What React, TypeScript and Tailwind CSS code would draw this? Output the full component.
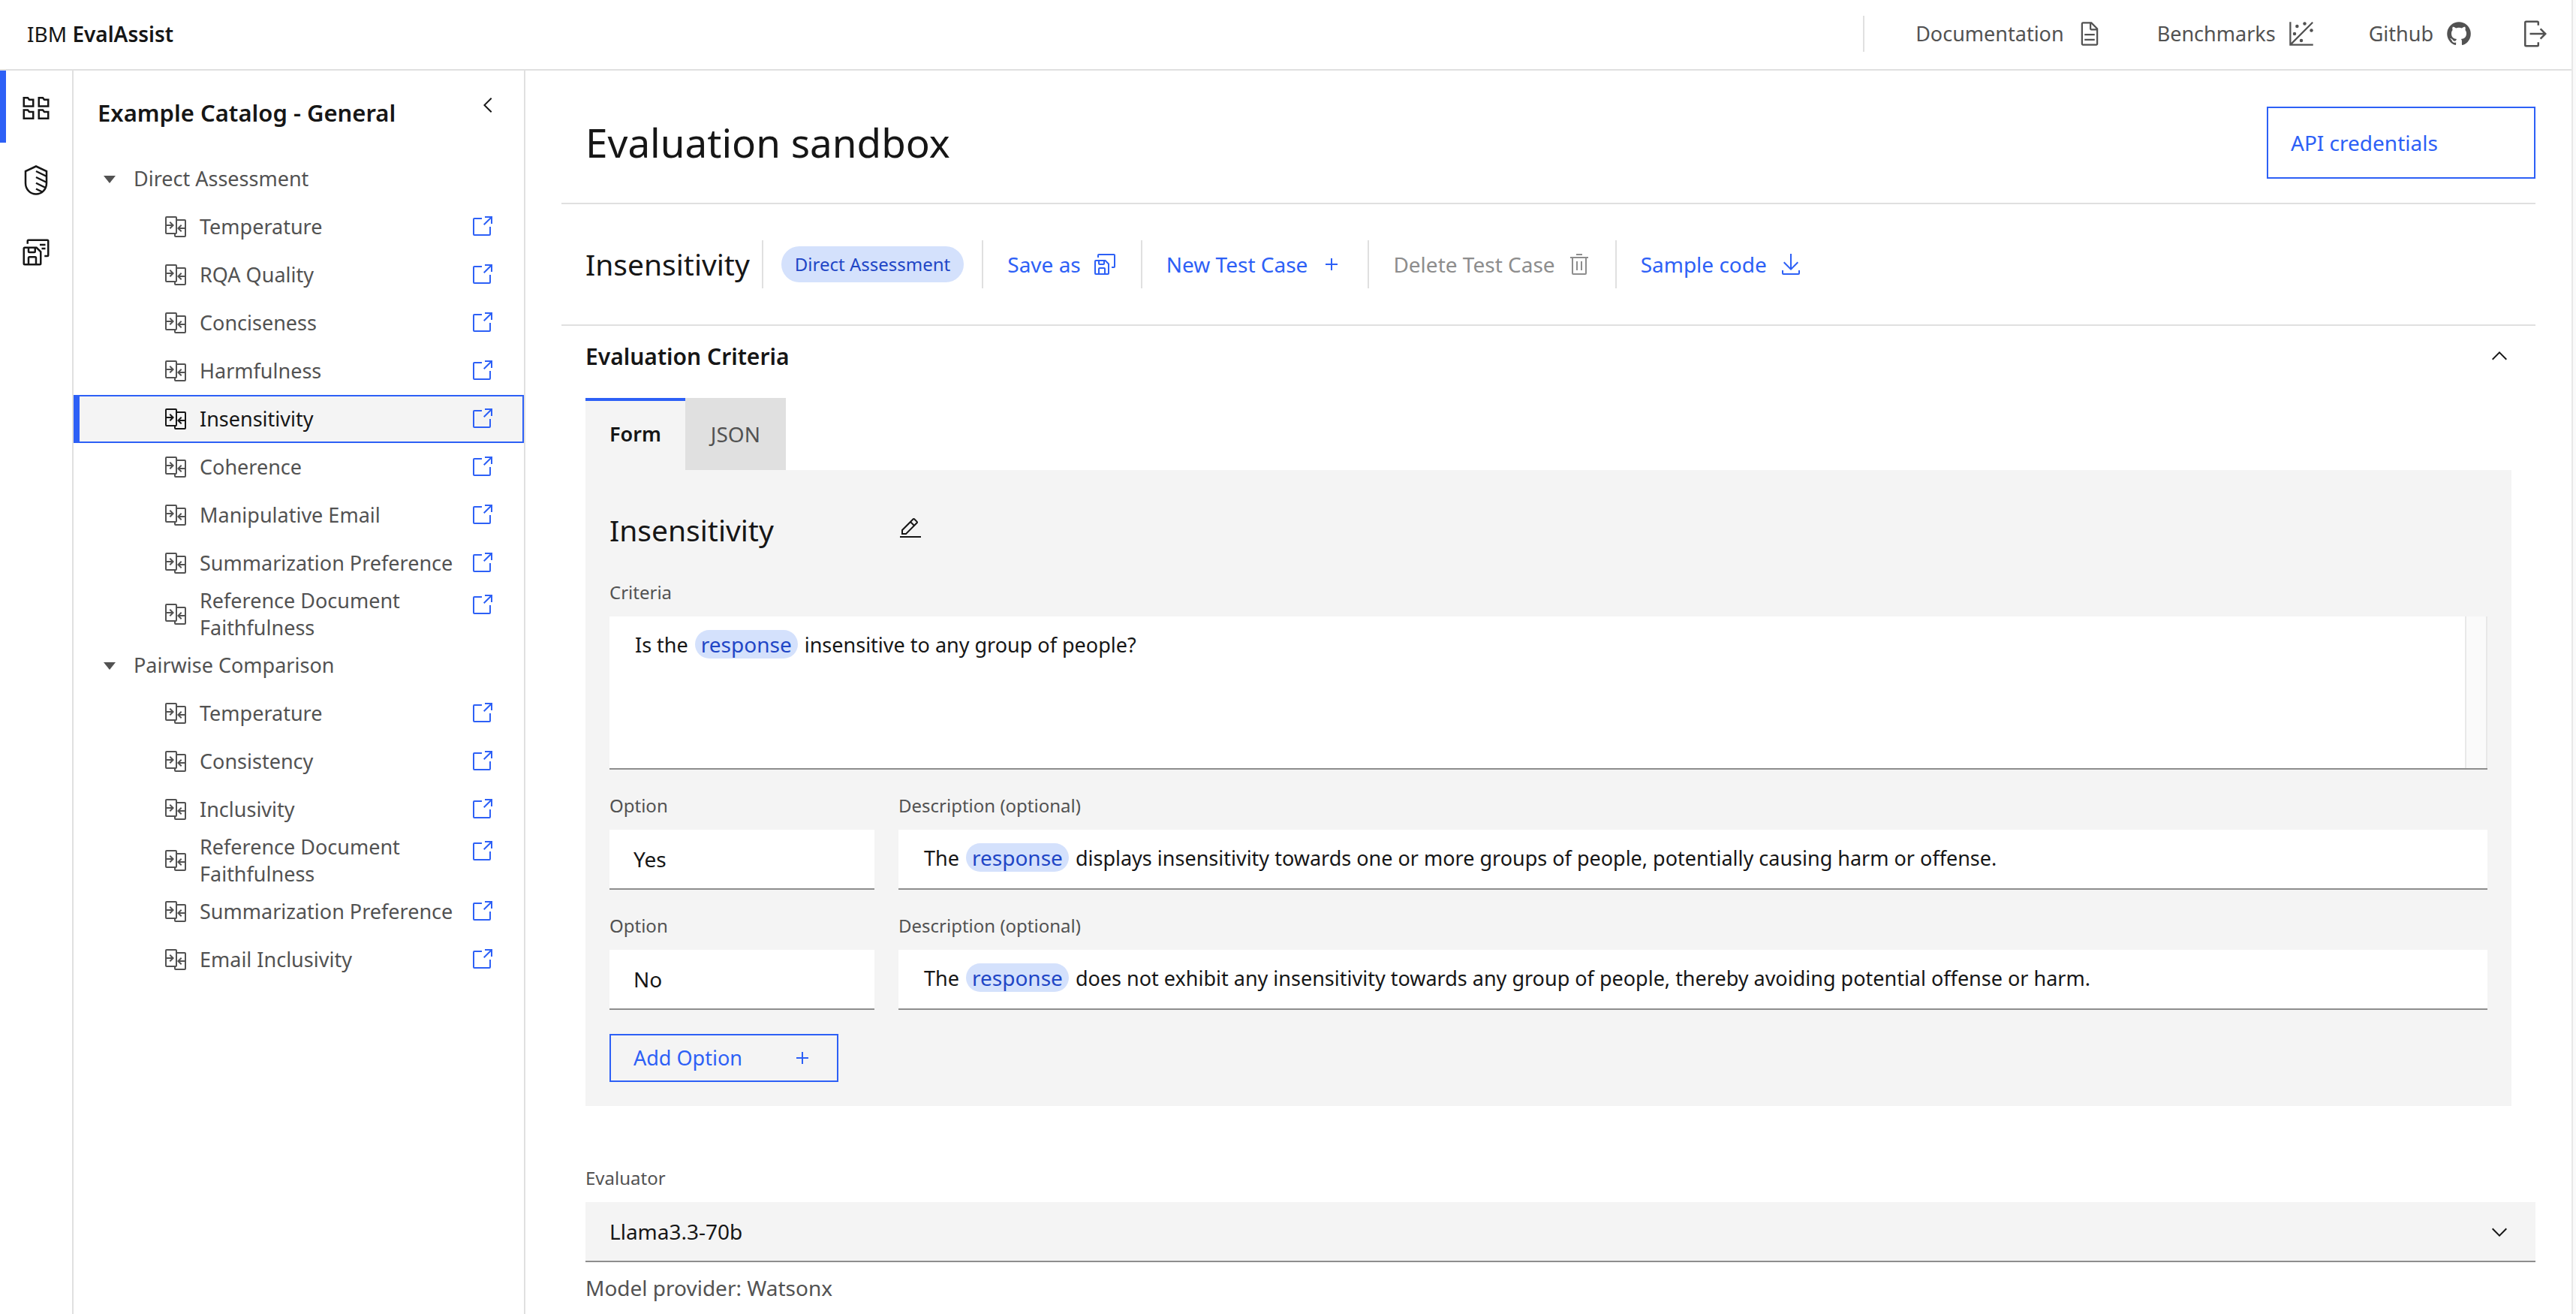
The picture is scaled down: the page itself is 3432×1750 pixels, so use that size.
import { useState, type ReactNode } from "react";

type IconProps = { className?: string };

function Icon({ className = "size-8", children }: IconProps & { children: ReactNode }) {
  return (
    <svg viewBox="0 0 32 32" fill="currentColor" aria-hidden="true" className={`${className} shrink-0 overflow-visible`}>
      {children}
    </svg>
  );
}

const CompareIcon = (p: IconProps) => (
  <Icon {...p}>
    <path d="M28,6H18V4a2,2,0,0,0-2-2H4A2,2,0,0,0,2,4V24a2,2,0,0,0,2,2H14v2a2,2,0,0,0,2,2H28a2,2,0,0,0,2-2V8A2,2,0,0,0,28,6ZM4,15h6.17L7.59,17.59,9,19l5-5L9,9,7.59,10.41,10.17,13H4V4H16V24H4ZM16,28V26a2,2,0,0,0,2-2V8H28v9H21.83l2.58-2.59L23,13l-5,5,5,5,1.41-1.41L21.83,19H28v9Z" />
  </Icon>
);

const LaunchIcon = (p: IconProps) => (
  <Icon {...p}>
    <path d="M26,28H6a2,2,0,0,1-2-2V6A2,2,0,0,1,6,4H16V6H6V26H26V16h2V26A2,2,0,0,1,26,28Z" />
    <path d="M20 2v2h6.586L18 12.586 19.414 14 28 5.414V12h2V2z" />
  </Icon>
);

const DownloadIcon = (p: IconProps) => (
  <Icon {...p}>
    <path d="M26,24v4H6V24H4v4a2,2,0,0,0,2,2H26a2,2,0,0,0,2-2V24Z" />
    <path d="M26 14 24.59 12.59 17 20.17V2h-2v18.17L7.41 12.59 6 14l10 10z" />
  </Icon>
);

const TrashIcon = (p: IconProps) => (
  <Icon {...p}>
    <path d="M12 12h2v12h-2zM18 12h2v12h-2zM12 2h8v2h-8z" />
    <path d="M4,6V8H6V28a2,2,0,0,0,2,2H24a2,2,0,0,0,2-2V8h2V6ZM8,28V8H24V28Z" />
  </Icon>
);

const AddIcon = (p: IconProps) => (
  <Icon {...p}>
    <path d="M17 15V8h-2v7H8v2h7v7h2v-7h7v-2z" />
  </Icon>
);

const EditIcon = (p: IconProps) => (
  <Icon {...p}>
    <path d="M2 26h28v2H2z" />
    <path d="M25.4,9c0.8-0.8,0.8-2,0-2.8l-3.6-3.6c-0.8-0.8-2-0.8-2.8,0l-15,15V24h6.4L25.4,9z M20.4,4L24,7.6l-3,3L17.4,7L20.4,4z M6,22v-3.6l10-10l3.6,3.6l-10,10H6z" />
  </Icon>
);

const DocumentIcon = (p: IconProps) => (
  <Icon {...p}>
    <path d="M25.7,9.3l-7-7C18.5,2.1,18.3,2,18,2H8C6.9,2,6,2.9,6,4v24c0,1.1,0.9,2,2,2h16c1.1,0,2-0.9,2-2V10C26,9.7,25.9,9.5,25.7,9.3z M18,4.4l5.6,5.6H18V4.4z M24,28H8V4h8v6c0,1.1,0.9,2,2,2h6V28z" />
    <path d="M10 22h12v2H10zM10 16h12v2H10z" />
  </Icon>
);

const ScatterIcon = (p: IconProps) => (
  <Icon {...p}>
    <path d="M3 2v27h27M3 29 29.5 2.5" fill="none" stroke="currentColor" strokeWidth="2" />
    <circle cx="11" cy="7" r="2" />
    <circle cx="20" cy="4" r="2" />
    <circle cx="28" cy="12" r="2" />
    <circle cx="8" cy="16" r="2" />
    <circle cx="16" cy="24" r="2" />
  </Icon>
);

const GithubIcon = (p: IconProps) => (
  <Icon {...p}>
    <path d="M16,2a14,14,0,0,0-4.43,27.28c.7.13,1-.3,1-.67s0-1.21,0-2.38c-3.89.84-4.71-1.88-4.71-1.88A3.71,3.71,0,0,0,6.24,22.3c-1.27-.86.1-.85.1-.85A2.94,2.94,0,0,1,8.48,22.9a3,3,0,0,0,4.08,1.16,2.93,2.93,0,0,1,.88-1.87c-3.1-.36-6.37-1.56-6.37-6.92a5.4,5.4,0,0,1,1.44-3.76,5,5,0,0,1,.14-3.7s1.17-.38,3.85,1.43a13.3,13.3,0,0,1,7,0c2.67-1.81,3.84-1.43,3.84-1.43a5,5,0,0,1,.14,3.7,5.4,5.4,0,0,1,1.44,3.76c0,5.38-3.27,6.56-6.39,6.91a3.33,3.33,0,0,1,.95,2.59c0,1.87,0,3.38,0,3.84s.25.81,1,.67A14,14,0,0,0,16,2Z" />
  </Icon>
);

const LogoutIcon = (p: IconProps) => (
  <Icon {...p}>
    <path d="M6,30H18a2,2,0,0,0,2-2V25H18v3H6V4H18V7h2V4a2,2,0,0,0-2-2H6A2,2,0,0,0,4,4V28A2,2,0,0,0,6,30Z" />
    <path d="M20.586 20.586 24.172 17H10v-2h14.172l-3.586-3.586L22 10l6 6-6 6z" />
  </Icon>
);

const SaveMultipleIcon = (p: IconProps) => (
  <Icon {...p}>
    <g fill="none" stroke="currentColor" strokeWidth="2">
      <path d="M4 11h12.5L21 15.5V28a1 1 0 0 1-1 1H4a1 1 0 0 1-1-1V12a1 1 0 0 1 1-1z" />
      <path d="M8 11v4a1 1 0 0 0 1 1h5a1 1 0 0 0 1-1v-4" />
      <path d="M8 29v-7a1 1 0 0 1 1-1h6a1 1 0 0 1 1 1v7" />
      <path d="M7 7V4a1 1 0 0 1 1-1h20a1 1 0 0 1 1 1v15a1 1 0 0 1-1 1h-3" />
    </g>
  </Icon>
);

const SavedCasesIcon = (p: IconProps) => (
  <Icon {...p}>
    <g fill="none" stroke="currentColor" strokeWidth="2">
      <path d="M4 11h12.5L21 15.5V28a1 1 0 0 1-1 1H4a1 1 0 0 1-1-1V12a1 1 0 0 1 1-1z" />
      <path d="M8 11v4a1 1 0 0 0 1 1h5a1 1 0 0 0 1-1v-4" />
      <path d="M8 29v-7a1 1 0 0 1 1-1h6a1 1 0 0 1 1 1v7" />
      <path d="M7 7V4a1 1 0 0 1 1-1h20a1 1 0 0 1 1 1v15a1 1 0 0 1-1 1h-3M20 8h6M22 12h4" />
    </g>
  </Icon>
);

const FoldersIcon = (p: IconProps) => (
  <Icon {...p}>
    <g fill="none" stroke="currentColor" strokeWidth="2">
      <path d="M3 5h4.2l1.6 2H13v7H3zM19 5h4.2l1.6 2H29v7H19zM3 18h4.2l1.6 2H13v7H3zM19 18h4.2l1.6 2H29v7H19z" />
    </g>
  </Icon>
);

const ShieldIcon = (p: IconProps) => (
  <Icon {...p}>
    <g fill="none" stroke="currentColor" strokeWidth="2">
      <path d="M16 1.2 27.2 6.4V19C27.2 26 22 30.8 16 30.8S4.8 26 4.8 19V6.4z" />
      <path d="M16 6.4 27 11.8M16 12.8 27 18.2M16 19 26.5 24.2M16 25.2 23 28.6" />
    </g>
  </Icon>
);

const ChevronLeft = (p: IconProps) => (
  <Icon {...p}>
    <path d="M10 16 20 6l1.4 1.4-8.6 8.6 8.6 8.6L20 26z" />
  </Icon>
);
const ChevronUp = (p: IconProps) => (
  <Icon {...p}>
    <path d="M16 10 26 20l-1.4 1.4-8.6-8.6-8.6 8.6L6 20z" />
  </Icon>
);
const ChevronDown = (p: IconProps) => (
  <Icon {...p}>
    <path d="M16 22 6 12l1.4-1.4 8.6 8.6 8.6-8.6L26 12z" />
  </Icon>
);
const CaretDown = (p: IconProps) => (
  <Icon {...p}>
    <path d="M24 12l-8 10-8-10z" />
  </Icon>
);

type Entry = { name: string; wraps?: boolean };

const catalog: { title: string; entries: Entry[] }[] = [
  {
    title: "Direct Assessment",
    entries: [
      { name: "Temperature" },
      { name: "RQA Quality" },
      { name: "Conciseness" },
      { name: "Harmfulness" },
      { name: "Insensitivity" },
      { name: "Coherence" },
      { name: "Manipulative Email" },
      { name: "Summarization Preference" },
      { name: "Reference Document Faithfulness", wraps: true },
    ],
  },
  {
    title: "Pairwise Comparison",
    entries: [
      { name: "Temperature" },
      { name: "Consistency" },
      { name: "Inclusivity" },
      { name: "Reference Document Faithfulness", wraps: true },
      { name: "Summarization Preference" },
      { name: "Email Inclusivity" },
    ],
  },
];

const options = [
  {
    id: "yes",
    value: "Yes",
    text: "displays insensitivity towards one or more groups of people, potentially causing harm or offense.",
  },
  {
    id: "no",
    value: "No",
    text: "does not exhibit any insensitivity towards any group of people, thereby avoiding potential offense or harm.",
  },
];

function Header() {
  const links = [
    { label: "Documentation", icon: <DocumentIcon className="size-9" /> },
    { label: "Benchmarks", icon: <ScatterIcon className="size-9" /> },
    { label: "Github", icon: <GithubIcon className="size-9" /> },
  ];
  return (
    <header className="flex h-[94px] shrink-0 items-center justify-between border-b-2 border-[#e0e0e0] pb-0.5">
      <a href="#home" className="pl-9 text-[28px]">
        IBM <span className="font-semibold">EvalAssist</span>
      </a>
      <nav aria-label="Resources" className="flex items-center text-[#525252]">
        <span className="mr-8 h-12 w-0.5 bg-[#e0e0e0]" />
        {links.map((l) => (
          <a key={l.label} href="#resource" className="flex items-center gap-4 px-9 text-[27px]">
            {l.label}
            {l.icon}
          </a>
        ))}
        <button type="button" aria-label="Log out" className="flex w-24 items-center justify-center">
          <LogoutIcon className="size-10" />
        </button>
      </nav>
    </header>
  );
}

function Rail() {
  return (
    <nav aria-label="Main" className="w-[98px] shrink-0 border-r-2 border-[#e0e0e0]">
      <button type="button" aria-label="Catalog" className="flex h-24 w-full items-center justify-center pt-1 shadow-[inset_8px_0_0_#2d60f6]">
        <FoldersIcon className="size-10" />
      </button>
      <button type="button" aria-label="Harms and risks" className="flex h-24 w-full items-center justify-center pt-1">
        <ShieldIcon className="size-10" />
      </button>
      <button type="button" aria-label="Saved test cases" className="flex h-24 w-full items-center justify-center pt-1">
        <SavedCasesIcon className="size-10" />
      </button>
    </nav>
  );
}

function CatalogRow({ entry, selected }: { entry: Entry; selected: boolean }) {
  return (
    <li
      className={`flex items-start pr-10 ${
        selected ? "bg-[#f4f4f4] text-[#161616] shadow-[inset_8px_0_0_#2d60f6,inset_0_0_0_2px_#2d60f6]" : ""
      }`}
    >
      <button type="button" className="flex min-h-16 flex-1 items-center gap-4 pl-[120px] text-left">
        <CompareIcon />
        {entry.name}
      </button>
      <a
        href="#open"
        aria-label={`Open ${entry.name}`}
        className={`ml-4 text-[#2d60f6] ${entry.wraps ? "mt-2" : "mt-4"}`}
      >
        <LaunchIcon />
      </a>
    </li>
  );
}

function Catalog() {
  return (
    <aside className="w-[602px] shrink-0 border-r-2 border-[#e0e0e0]">
      <div className="flex h-28 items-start justify-between px-8 pt-[30px]">
        <h2 className="text-[31px] leading-[52px] font-semibold">Example Catalog - General</h2>
        <button type="button" aria-label="Collapse catalog">
          <ChevronLeft />
        </button>
      </div>
      {catalog.map((group) => (
        <section key={group.title} className="text-[27px] leading-9 text-[#525252]">
          <button type="button" className="flex h-16 w-full items-center gap-4 pl-8">
            <CaretDown />
            {group.title}
          </button>
          <ul>
            {group.entries.map((e) => (
              <CatalogRow key={e.name} entry={e} selected={e.name === "Insensitivity"} />
            ))}
          </ul>
        </section>
      ))}
    </aside>
  );
}

const Separator = () => <span className="h-16 w-0.5 bg-[#e0e0e0]" />;

function Toolbar() {
  const action = "flex h-16 items-center gap-4 px-8 text-[28px] text-[#2d60f6]";
  return (
    <div className="flex items-center border-b-2 border-[#e0e0e0] py-12 pl-8">
      <h2 className="mr-4 text-[39px] leading-[56px]">Insensitivity</h2>
      <Separator />
      <span className="mx-6 flex h-12 items-center rounded-full bg-[#d4e1fc] px-[18px] text-[24px] text-[#1f46c6]">
        Direct Assessment
      </span>
      <Separator />
      <button type="button" className={action}>
        Save as <SaveMultipleIcon />
      </button>
      <Separator />
      <button type="button" className={action}>
        New Test Case <AddIcon />
      </button>
      <Separator />
      <button type="button" disabled className="flex h-16 items-center gap-4 px-8 text-[28px] text-[#8d8d8d]">
        Delete Test Case <TrashIcon />
      </button>
      <Separator />
      <button type="button" className={action}>
        Sample code <DownloadIcon />
      </button>
    </div>
  );
}

const Variable = ({ children }: { children: ReactNode }) => (
  <span className="mx-0.5 inline-block h-[38px] rounded-full bg-[#d4e1fc] px-2 text-[28px] leading-[38px] text-[#1f46c6]">
    {children}
  </span>
);

function RichText({ labelledBy, className, children }: { labelledBy: string; className: string; children: ReactNode }) {
  return (
    <div
      role="textbox"
      aria-multiline="true"
      aria-labelledby={labelledBy}
      contentEditable
      suppressContentEditableWarning
      className={`border-b-2 border-[#8d8d8d] bg-white text-[27px] leading-[38px] outline-none ${className}`}
    >
      {children}
    </div>
  );
}

function OptionRow({ id, value, text }: { id: string; value: string; text: string }) {
  const [current, setCurrent] = useState(value);
  return (
    <div className="mt-8 grid grid-cols-[353px_1fr] gap-x-8">
      <div className="flex flex-col gap-4">
        <label htmlFor={`option-${id}`} className="text-[24px] leading-8 text-[#525252]">
          Option
        </label>
        <input
          id={`option-${id}`}
          value={current}
          onChange={(e) => setCurrent(e.target.value)}
          className="h-20 w-full border-b-2 border-[#8d8d8d] bg-white px-8 text-[28px] outline-none"
        />
      </div>
      <div className="flex flex-col gap-4">
        <span id={`description-${id}`} className="text-[24px] leading-8 text-[#525252]">
          Description (optional)
        </span>
        <RichText labelledBy={`description-${id}`} className="h-20 pt-[18px] pl-[34px]">
          The <Variable>response</Variable> {text}
        </RichText>
      </div>
    </div>
  );
}

function CriteriaForm() {
  return (
    <div role="tabpanel" className="bg-[#f4f4f4] p-8">
      <div className="mb-5 flex h-[95px] items-center gap-8">
        <h3 className="w-[353px] text-[39px] leading-[56px]">Insensitivity</h3>
        <button type="button" aria-label="Edit name" className="pb-1">
          <EditIcon />
        </button>
      </div>
      <p id="criteria-label" className="mb-4 text-[24px] leading-8 text-[#525252]">
        Criteria
      </p>
      <div className="flex">
        <RichText labelledBy="criteria-label" className="h-[204px] flex-1 pt-[18px] pl-[34px]">
          Is the <Variable>response</Variable> insensitive to any group of people?
        </RichText>
        <div className="w-[30px] border-b-2 border-[#8d8d8d]">
          <div className="h-full border-x-2 border-[#e8e8e8] bg-[#fafafa]" />
        </div>
      </div>
      {options.map((o) => (
        <OptionRow key={o.id} {...o} />
      ))}
      <button
        type="button"
        className="mt-8 flex h-16 w-[305px] items-center justify-between border-2 border-[#2d60f6] px-[30px] text-[27px] text-[#2d60f6]"
      >
        Add Option <AddIcon />
      </button>
    </div>
  );
}

function Main() {
  return (
    <main className="min-w-0 flex-1 px-12">
      <div className="flex items-center justify-between border-b-2 border-[#e0e0e0] pt-12 pb-8 pl-8">
        <h1 className="text-[53px] leading-[72px]">Evaluation sandbox</h1>
        <button type="button" className="h-24 w-[358px] border-2 border-[#2d60f6] px-[30px] text-left text-[28px] text-[#2d60f6]">
          API credentials
        </button>
      </div>
      <Toolbar />
      <section className="pl-8">
        <button type="button" aria-expanded="true" className="mb-4 flex h-20 w-full items-center justify-between pr-8 text-[30px] font-semibold">
          Evaluation Criteria
          <ChevronUp />
        </button>
        <div className="pr-8">
          <div role="tablist" className="flex">
            <button
              type="button"
              role="tab"
              aria-selected="true"
              className="h-24 bg-[#f4f4f4] px-8 text-[27px] font-semibold shadow-[inset_0_4px_0_#2d60f6]"
            >
              Form
            </button>
            <button type="button" role="tab" aria-selected="false" className="h-24 bg-[#e0e0e0] px-[34px] text-[28px] text-[#525252]">
              JSON
            </button>
          </div>
          <CriteriaForm />
        </div>
      </section>
      <section className="mt-20 pl-8">
        <label htmlFor="evaluator" className="mb-4 block text-[24px] leading-8 text-[#525252]">
          Evaluator
        </label>
        <div className="relative">
          <select
            id="evaluator"
            className="h-20 w-full appearance-none border-b-2 border-[#8d8d8d] bg-[#f4f4f4] px-8 text-[28px] outline-none"
          >
            <option>Llama3.3-70b</option>
          </select>
          <ChevronDown className="pointer-events-none absolute top-6 right-8 size-8" />
        </div>
        <p className="mt-4 text-[28px] leading-9 text-[#525252]">Model provider: Watsonx</p>
      </section>
    </main>
  );
}

export default function App() {
  return (
    <div className="flex h-screen overflow-hidden bg-white font-['Noto_Sans',sans-serif] text-[#161616]">
      <div className="flex min-w-0 flex-1 flex-col">
        <Header />
        <div className="flex min-h-0 flex-1">
          <Rail />
          <Catalog />
          <Main />
        </div>
      </div>
      <div className="w-1.5 border-l-2 border-[#e8e8e8] bg-[#fafafa]" />
    </div>
  );
}
